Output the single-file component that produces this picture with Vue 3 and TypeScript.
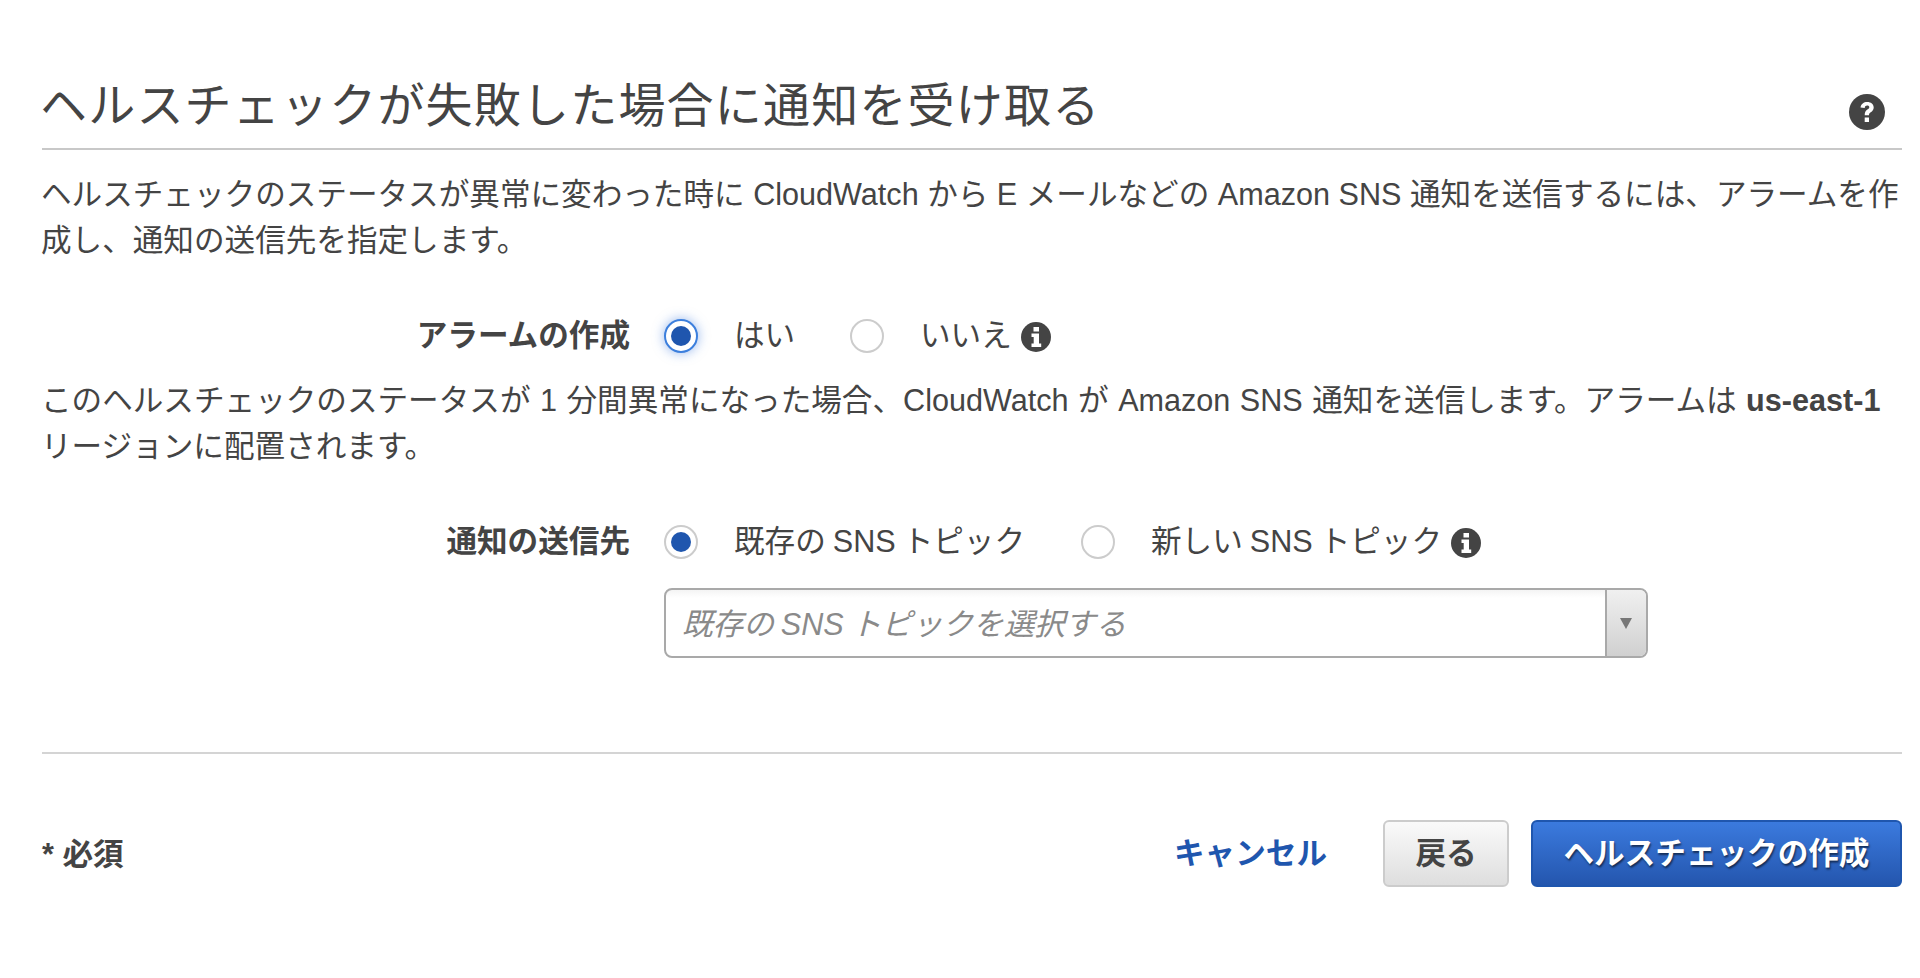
<script setup lang="ts">
const yesNo = [
  { label: 'はい', checked: true, focus: true },
  { label: 'いいえ', checked: false, focus: false, info: true },
]
const topics = [
  { label: '既存の SNS トピック', checked: true, focus: false },
  { label: '新しい SNS トピック', checked: false, focus: false, info: true },
]
</script>

<template>
  <main class="page">
    <header class="head">
      <h1>ヘルスチェックが失敗した場合に通知を受け取る</h1>
      <svg class="help" viewBox="0 0 36 36" aria-hidden="true">
        <circle cx="18" cy="18" r="18" fill="#444" />
        <path d="M11.5 13.5c.6-3.6 3.2-5.5 6.7-5.5 3.800 0 6.500 2.200 6.500 5.400 0 2.400-1.300 3.600-3 4.800-1.300.9-1.700 1.500-1.700 3h-4.300c0-2.900.8-4.200 2.700-5.600 1.300-1 1.900-1.500 1.900-2.400 0-1-.9-1.700-2.100-1.700-1.400 0-2.200.8-2.500 2.400z" fill="#fff" />
        <rect x="15.700" y="23.500" width="4.300" height="4.500" fill="#fff" />
      </svg>
    </header>

    <p class="text intro">ヘルスチェックのステータスが異常に変わった時に CloudWatch から E メールなどの Amazon SNS 通知を送信するには、アラームを作成し、通知の送信先を指定します。</p>

    <div class="row first">
      <div class="label">アラームの作成</div>
      <div class="options">
        <label v-for="o in yesNo" :key="o.label" class="opt" :class="{ wide: !o.info }">
          <span class="radio" :class="{ on: o.checked, focus: o.focus }"></span>
          <span class="opt-text">{{ o.label }}</span>
          <svg v-if="o.info" class="info" viewBox="0 0 30 30" aria-hidden="true">
            <circle cx="15" cy="15" r="15" fill="#444" />
            <rect x="12.500" y="5" width="5.500" height="4.500" fill="#fff" />
            <path d="M10.500 11.500h7.500v10h2.200v3.500h-9.700v-3.500h2.200v-6.500h-2.200z" fill="#fff" />
          </svg>
        </label>
      </div>
    </div>

    <p class="text alarm">このヘルスチェックのステータスが 1 分間異常になった場合、CloudWatch が Amazon SNS 通知を送信します。アラームは <b>us-east-1</b> リージョンに配置されます。</p>

    <div class="row second">
      <div class="label">通知の送信先</div>
      <div class="options">
        <label v-for="o in topics" :key="o.label" class="opt" :class="{ wide2: !o.info }">
          <span class="radio" :class="{ on: o.checked }"></span>
          <span class="opt-text">{{ o.label }}</span>
          <svg v-if="o.info" class="info" viewBox="0 0 30 30" aria-hidden="true">
            <circle cx="15" cy="15" r="15" fill="#444" />
            <rect x="12.500" y="5" width="5.500" height="4.500" fill="#fff" />
            <path d="M10.500 11.500h7.500v10h2.200v3.500h-9.700v-3.500h2.200v-6.500h-2.200z" fill="#fff" />
          </svg>
        </label>
      </div>
    </div>

    <div class="select">
      <span class="placeholder">既存の SNS トピックを選択する</span>
      <span class="arrow"><i></i></span>
    </div>

    <hr class="divider" />

    <footer class="foot">
      <span class="required">* 必須</span>
      <div class="actions">
        <a class="cancel">キャンセル</a>
        <button class="btn back" type="button">戻る</button>
        <button class="btn create" type="button">ヘルスチェックの作成</button>
      </div>
    </footer>
  </main>
</template>

<style scoped>
.page {
  box-sizing: border-box;
  width: 1920px;
  height: 978px;
  padding: 0 18px 0 42px;
  overflow: hidden;
  background: #fff;
  color: #444;
  font-family: "Liberation Sans", "Noto Sans CJK JP", sans-serif;
}
.head {
  height: 150px;
  box-sizing: border-box;
  padding-top: 77px;
  border-bottom: 2px solid #c8c8c8;
  display: flex;
  justify-content: space-between;
  align-items: flex-start;
}
h1 {
  margin: 0 0 0 -2px;
  font-size: 47px;
  line-height: 58px;
  font-weight: 400;
  letter-spacing: 1.2px;
  white-space: nowrap;
}
.help {
  width: 36px;
  height: 36px;
  margin: 17px 17px 0 0;
}
.text {
  margin: 0;
  font-size: 30.600px;
  line-height: 46px;
  font-weight: 400;
}
.intro {
  padding-top: 21px;
  margin-left: -1px;
}
.row {
  display: flex;
  align-items: center;
  height: 50px;
}
.first {
  margin-top: 48px;
}
.second {
  margin-top: 48px;
}
.alarm {
  margin-top: 16px;
  margin-left: -1px;
  word-spacing: 1px;
}
.alarm b {
  font-weight: 700;
}
.label {
  width: 588px;
  flex: none;
  text-align: right;
  font-size: 30.600px;
  line-height: 36px;
  font-weight: 700;
  padding-bottom: 2px;
}
.options {
  display: flex;
  align-items: center;
  margin-left: 34px;
}
.opt {
  display: flex;
  align-items: center;
  font-size: 30.600px;
  line-height: 36px;
  font-weight: 400;
}
.opt-text {
  padding-bottom: 3px;
  word-spacing: -1.500px;
}
.wide {
  width: 186px;
}
.wide2 {
  width: 417px;
}
.radio {
  box-sizing: border-box;
  width: 34px;
  height: 34px;
  flex: none;
  border-radius: 50%;
  border: 2px solid #ccc;
  background: #fff;
  margin-right: 36px;
  position: relative;
}
.radio.on::after {
  content: "";
  position: absolute;
  inset: 5px;
  border-radius: 50%;
  background: #1f56ae;
}
.radio.focus {
  border-color: #3c7fdd;
  box-shadow: 0 0 12px rgba(60, 120, 220, .55);
}
.info {
  width: 30px;
  height: 30px;
  margin: 2px 0 0 9px;
}
.select {
  box-sizing: border-box;
  margin: 21px 0 0 622px;
  width: 984px;
  height: 70px;
  display: flex;
  align-items: center;
  justify-content: space-between;
  border: 2px solid #a9a9a9;
  border-radius: 8px;
  background: linear-gradient(#f4f4f4, #fff 12%);
  overflow: hidden;
}
.placeholder {
  padding-left: 16px;
  padding-top: 2px;
  font-size: 30.600px;
  line-height: 36px;
  font-style: italic;
  font-weight: 400;
  word-spacing: -1.500px;
  color: #8a8a8a;
}
.arrow {
  box-sizing: border-box;
  width: 41px;
  height: 100%;
  flex: none;
  display: flex;
  align-items: center;
  justify-content: center;
  border-left: 2px solid #a9a9a9;
  background: linear-gradient(#f0f0f0, #d0d0d0);
}
.arrow i {
  width: 0;
  height: 0;
  margin-right: 2px;
  border-left: 6px solid transparent;
  border-right: 6px solid transparent;
  border-top: 11px solid #777;
}
.divider {
  margin: 94px 0 0;
  border: 0;
  height: 2px;
  background: #d4d4d4;
}
.foot {
  margin-top: 66px;
  display: flex;
  align-items: center;
  justify-content: space-between;
}
.required {
  font-size: 30.600px;
  line-height: 36px;
  font-weight: 700;
}
.actions {
  display: flex;
  align-items: center;
}
.cancel {
  color: #1f56ae;
  font-size: 30.600px;
  line-height: 36px;
  font-weight: 700;
  margin-right: 56px;
  padding-bottom: 2px;
}
.btn {
  height: 67px;
  box-sizing: border-box;
  border-radius: 6px;
  font-family: inherit;
  font-size: 30.600px;
  line-height: 36px;
  font-weight: 700;
  padding: 0 0 2px;
}
.back {
  width: 126px;
  margin-right: 22px;
  border: 2px solid #ccc;
  background: linear-gradient(#fafafa, #dedede);
  color: #444;
}
.create {
  width: 371px;
  border: 2px solid #1f56ae;
  background: linear-gradient(#3b7ade, #2456ae);
  color: #fff;
  text-shadow: 1px 2px 2px rgba(0, 0, 0, .55);
}
</style>
